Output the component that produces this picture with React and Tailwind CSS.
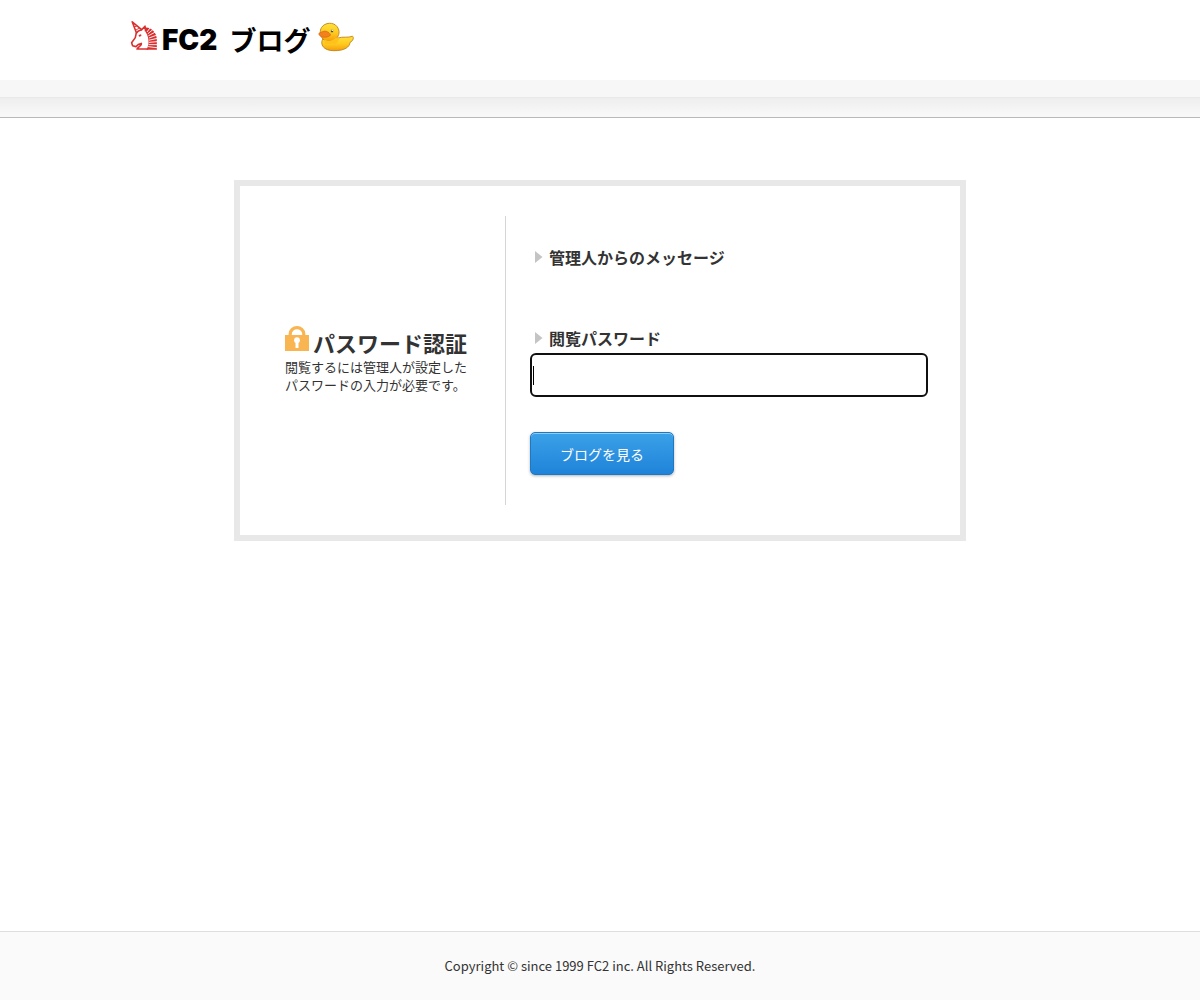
function Unicorn() {
  return (
    <svg viewBox="0 0 28 32" className="h-8 w-7 shrink-0" fill="none" stroke="#d9302f" aria-hidden="true">
      <path d="M6.6 13.2 L2.2 1.8 L11.6 9.6" strokeWidth="1.6" strokeLinejoin="round" />
      <path d="M4.2 7 L6.8 6 M5.4 10.2 L9.4 8.2" strokeWidth="0.9" />
      <path d="M11 10.4 L15 6.2 L15.6 11.5 M11.6 9.8 C9 10.4 7 11.8 6.2 13.4 L5.3 17.6 L1.6 22.8 L2.6 25.8 L6 26.6 L8.2 24.6 L11.4 23.4 C12 25.6 8 26.8 7 29 L18 29" strokeWidth="1.6" strokeLinejoin="round" />
      <path d="M8.8 15.8 L11.2 15.2" strokeWidth="1.8" />
      <path d="M15.8 7.4 C21.5 7.2 26.6 12.5 26.8 19 L26.9 29.8 L16.4 29.8 C19.2 25.5 19.6 18 15.6 12 Z" fill="#d9302f" stroke="none" />
      <path d="M17 12 L20.6 7.2 M17.8 13.8 L23.4 9.2 M18.4 15.8 L25.4 12 M18.9 18 L26.8 15.2 M19 20.2 L27.4 18.4 M18.9 22.4 L27.6 21.6 M18.6 24.6 L27.6 24.7 M18.1 26.6 L27.6 27.8" stroke="#fff" strokeWidth="0.9" />
    </svg>
  );
}

function Duck() {
  return (
    <svg viewBox="0 0 36 30" className="h-[30px] w-9 shrink-0" aria-hidden="true">
      <defs>
        <linearGradient id="duck" x1="0" y1="0" x2="0" y2="1">
          <stop offset="0" stopColor="#ffe23c" />
          <stop offset="0.55" stopColor="#ffc91e" />
          <stop offset="1" stopColor="#f59d0a" />
        </linearGradient>
      </defs>
      <path d="M5 16.5 C1.5 22.5 5.5 28.7 16 28.7 C27 28.7 31.5 25 32 20.5 C35.5 18.5 36 15.5 34.5 14.2 C30 16.2 25 14.2 20 16 Z" fill="url(#duck)" stroke="#bd8218" strokeWidth="0.9" />
      <path d="M5 17 C1.8 14 1.6 8.4 3.6 5.4 C7 .3 15.5 -.3 19.2 4.8 C22 8.7 21.5 13.4 18.4 16.4 C14 20 8 20 5 17 Z" fill="url(#duck)" stroke="#bd8218" strokeWidth="0.9" />
      <path d="M6 17.2 C10 19.8 15 18.8 18.2 15.5 L22 16 L18 22 L7 22 Z" fill="#ffc21c" />
      <path d="M1 11.2 C3.5 10 5.5 8.7 8 9.2 C10 9.7 12.5 11.5 12.6 13 C11 15.4 5.5 16 2.8 14.4 C1.2 13.4 .4 12 1 11.2 Z" fill="#f3801c" stroke="#cf6412" strokeWidth="0.6" />
      <ellipse cx="14" cy="9" rx="1.7" ry="1.9" fill="#c8bb57" />
      <circle cx="14" cy="9.2" r="1" fill="#55400d" />
      <circle cx="14.3" cy="8.4" r=".6" fill="#fff" />
    </svg>
  );
}

function Lock() {
  return (
    <svg viewBox="0 0 24 26" className="h-[26px] w-6 shrink-0" aria-hidden="true">
      <path d="M5.2 12 V8 A6.8 6.3 0 0 1 18.8 8 V12" fill="none" stroke="#f8b551" strokeWidth="3.2" />
      <rect y="9" width="24" height="16" fill="#f8b551" />
      <circle cx="12" cy="14.2" r="2.9" fill="#fff" />
      <path d="M10.5 15 H13.5 V22 H10.5 Z" fill="#fff" />
    </svg>
  );
}

function Arrow() {
  return (
    <svg viewBox="0 0 8 12" className="h-3 w-2 shrink-0" aria-hidden="true">
      <path d="M0 0 L7.5 6 L0 12 Z" fill="#c4c4c4" />
    </svg>
  );
}

export default function App() {
  return (
    <div className="flex min-h-screen flex-col bg-white font-['Noto_Sans_CJK_JP',sans-serif] text-[13px] leading-[18px] text-[#333]">
      <header>
        <div className="mx-auto flex h-20 max-w-[940px] items-start pt-5">
          <a href="#" className="flex items-start text-black">
            <Unicorn />
            <span className="ml-1 pt-1 font-['Inter',sans-serif] text-[28px] leading-8 font-black">FC2</span>
            <span className="ml-3 pt-1 text-[27px] leading-8 font-bold">ブログ</span>
            <span className="ml-2 pt-0.5"><Duck /></span>
          </a>
        </div>
        <div className="h-[17px] bg-[#f7f7f7]" />
        <div className="h-[21px] border-t border-b border-t-[#e9e9e9] border-b-[#b9b9b9] bg-linear-to-b from-[#eeeeee] to-[#f9f9f9]" />
      </header>

      <main className="grow px-4 pt-[62px] pb-16">
        <form onSubmit={(e) => e.preventDefault()} className="mx-auto flex max-w-[732px] border-6 border-[#e8e8e8] p-[30px]">
          <section className="flex w-[236px] shrink-0 flex-col justify-center border-r border-[#d5d5d5] pb-0.5 pl-[15px]">
            <h1 className="flex items-start gap-1 text-[22px] leading-8 font-bold">
              <Lock />
              <span>パスワード認証</span>
            </h1>
            <p>
              閲覧するには管理人が設定した
              <br />
              パスワードの入力が必要です。
            </p>
          </section>
          <section className="min-w-0 grow pt-[29px] pr-0.5 pb-[30px] pl-6">
            <h2 className="flex items-center gap-1.5 pl-[5px] text-base leading-6 font-bold">
              <Arrow />
              管理人からのメッセージ
            </h2>
            <label htmlFor="password" className="mt-[57px] flex items-center gap-1.5 pl-[5px] text-base leading-6 font-bold">
              <Arrow />
              閲覧パスワード
            </label>
            <div className="relative mt-[3px]">
              <input
                id="password"
                type="password"
                autoFocus
                className="block h-11 w-full rounded-md border-2 border-[#101010] bg-white px-1 caret-transparent outline-none"
              />
              <span className="pointer-events-none absolute top-[13px] left-[3px] h-[19px] w-px bg-black" />
            </div>
            <button
              type="submit"
              className="mt-[35px] block h-[43px] w-36 rounded-[5px] border border-[#1f78c2] bg-linear-to-b from-[#3ba1e8] to-[#1f83d9] text-sm text-white shadow-[0_1px_3px_rgba(0,0,0,0.3),inset_0_1px_0_rgba(255,255,255,0.45)]"
            >
              ブログを見る
            </button>
          </section>
        </form>
      </main>

      <footer className="border-t border-[#dedede] bg-[#fafafa] px-4 py-[25px] text-center">
        <p>Copyright © since 1999 FC2 inc. All Rights Reserved.</p>
      </footer>
    </div>
  );
}
